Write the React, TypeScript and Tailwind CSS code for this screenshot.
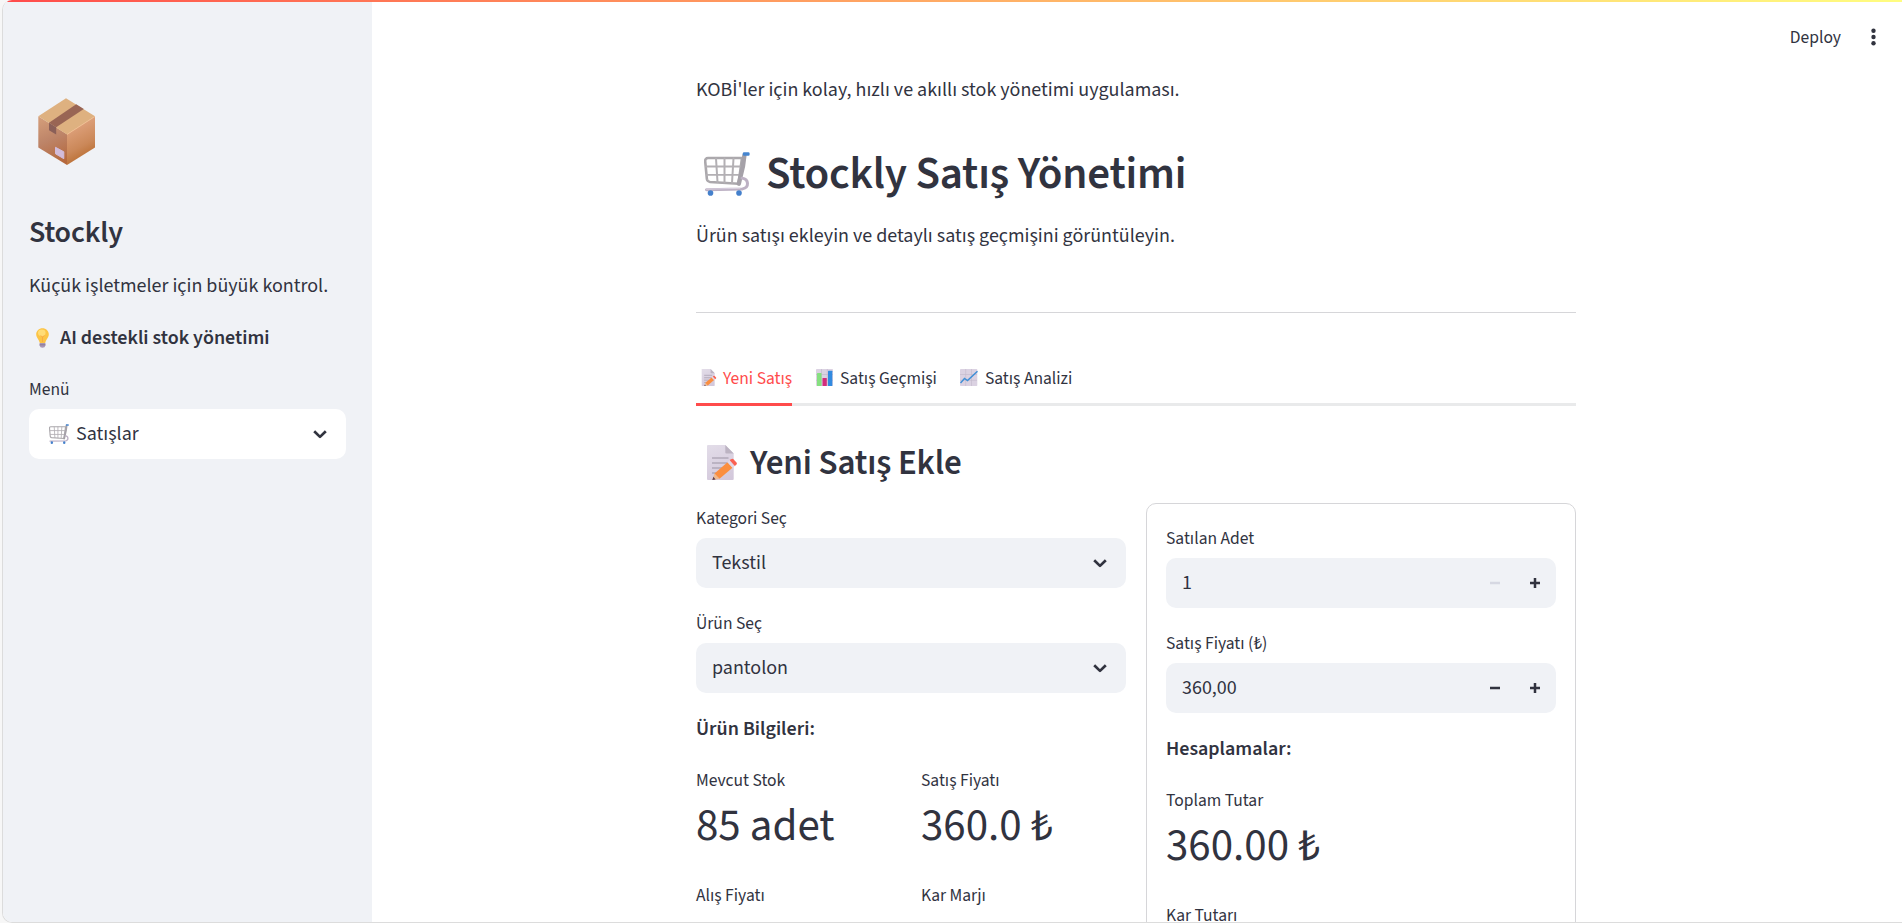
import type { ReactNode } from "react";

function PackageIcon({ className }: { className: string }) {
  return (
    <svg viewBox="0 0 57 67" className={className} fill="none">
      <defs>
        <linearGradient id="boxLeft" x1="0" y1="18" x2="22" y2="66" gradientUnits="userSpaceOnUse">
          <stop stopColor="#d6a07c" />
          <stop offset="0.5" stopColor="#bd8468" />
          <stop offset="1" stopColor="#b5683c" />
        </linearGradient>
        <linearGradient id="boxRight" x1="34" y1="30" x2="50" y2="60" gradientUnits="userSpaceOnUse">
          <stop stopColor="#dda07a" />
          <stop offset="0.6" stopColor="#cb8859" />
          <stop offset="1" stopColor="#b96d31" />
        </linearGradient>
      </defs>
      <path d="M0.3 18.3 29 36.3V67L0.3 49.4Z" fill="url(#boxLeft)" />
      <path d="M57 18.3 29 36.3V67L57 49.4Z" fill="url(#boxRight)" />
      <path d="M28 0.3 57 18.3 29 36.5 0.3 18.3Z" fill="#deb180" />
      <path d="M29 36.5 57 18.5" stroke="#f0be92" strokeWidth="0.9" />
      <path d="M38.2 6.2 45.8 10.9 18.2 29.3 11 24.8Z" fill="#996554" />
      <path d="M11 24.8 18.2 29.3V36.5L11 32.2Z" fill="#8a5f58" />
      <path d="M17.5 49.3 25.8 53.8V60.7L17.5 55.8Z" fill="#d2bcda" stroke="#d2bcda" strokeWidth="1" strokeLinejoin="round" />
    </svg>
  );
}

function CartIcon({ className }: { className: string }) {
  return (
    <svg viewBox="0 0 46 47" preserveAspectRatio="none" className={className} fill="none" strokeLinecap="round" strokeLinejoin="round">
      <path d="M4 6.5H38L34.5 34 6 32Q3.3 31.5 2.9 29L1.2 10Q1 6.5 4 6.5Z" stroke="#aba8ac" strokeWidth="2.6" />
      <path d="M2 15.5H36.5M3 24.5H35.5M12 7 13.5 32M20.5 7V32.5M29.5 7 28 33" stroke="#b3b0b4" strokeWidth="2" />
      <path d="M40.4 3.5 39 15 34.8 34" stroke="#a5a1a8" strokeWidth="4.4" />
      <path d="M38 28C45 29 45.5 38 38.5 39.5L2.5 40.3" stroke="#bdb1c4" strokeWidth="3" />
      <path d="M36 38.8 2.5 39.7" stroke="#dcd3e2" strokeWidth="1" />
      <rect x="38.8" y="0.3" width="6.8" height="3.8" rx="1.2" fill="#4585cf" />
      <ellipse cx="6.5" cy="43.8" rx="2.8" ry="3" fill="#4480cc" />
      <ellipse cx="35" cy="43.8" rx="2.8" ry="3" fill="#4480cc" />
    </svg>
  );
}

function BulbIcon({ className }: { className: string }) {
  return (
    <svg viewBox="0 0 13 20" className={className} fill="none">
      <path d="M6.5 0.2C10 0.2 12.8 2.9 12.8 6.3C12.8 9.7 10 11.2 9.2 15H3.8C3 11.2 0.2 9.7 0.2 6.3C0.2 2.9 3 0.2 6.5 0.2Z" fill="#fcc445" />
      <ellipse cx="5.8" cy="4.8" rx="3.8" ry="3.4" fill="#ffdc76" />
      <path d="M4.5 7.5 6.5 9 8.5 7.5M6.5 9V14" stroke="#f6a545" strokeWidth="0.8" />
      <path d="M3.6 15H9.4V17.5Q9 19.8 6.5 19.8Q4 19.8 3.6 17.5Z" fill="#a897b5" />
      <path d="M3.6 16.8H9.4" stroke="#84708f" strokeWidth="0.8" />
    </svg>
  );
}

function MemoIcon({ className }: { className: string }) {
  return (
    <svg viewBox="0 0 30 35" className={className} fill="none">
      <defs>
        <linearGradient id="memoSheet" x1="4" y1="0" x2="20" y2="35" gradientUnits="userSpaceOnUse">
          <stop stopColor="#e2dce8" />
          <stop offset="1" stopColor="#d3c8db" />
        </linearGradient>
      </defs>
      <path d="M1 0H18.3L26.7 8.5V34Q26.7 35 25.7 35H1Q0 35 0 34V1Q0 0 1 0Z" fill="url(#memoSheet)" />
      <path d="M18.3 0 26.7 8.5H19.3Q18.3 8.5 18.3 7.5Z" fill="#bcb3c2" />
      <path d="M5 13H21.5M5 18H20M5 23H15M5 28H10" stroke="#9b93a3" strokeWidth="1.2" />
      <path d="M7.5 28.5 12.5 33.8 5.3 35Z" fill="#efb98e" />
      <path d="M6.4 31.8 8.6 34.4 5.3 35Z" fill="#5c4151" />
      <path d="M7.5 28.5 20.5 17.3 25.5 22.8 12.5 33.8Z" fill="#fb8e3f" />
      <path d="M20.5 17.3 22.8 15.3 27.8 20.9 25.5 22.8Z" fill="#e2d8e6" />
      <path d="M22.8 15.3 24.2 14.2Q25.5 13.2 26.7 14.4L29.5 17.6Q30.4 18.8 29.3 19.7L27.8 20.9Z" fill="#fa6152" />
    </svg>
  );
}

function BarsIcon({ className }: { className: string }) {
  return (
    <svg viewBox="0 0 17 17" className={className}>
      <rect width="17" height="17" rx="0.8" fill="#dbd2e2" />
      <path d="M5.5 0V17M11.3 0V17M0 5.5H17M0 11.3H17" stroke="#c0b5c9" strokeWidth="0.6" />
      <rect x="1" y="4" width="4.5" height="13" rx="0.5" fill="#86e080" />
      <rect x="6.5" y="9" width="4.3" height="8" rx="0.5" fill="#d32c7c" />
      <rect x="12" y="1.8" width="4.3" height="15.2" rx="0.5" fill="#328ae0" />
    </svg>
  );
}

function TrendIcon({ className }: { className: string }) {
  return (
    <svg viewBox="0 0 18 17" className={className} fill="none">
      <rect width="17.3" height="17" rx="0.8" fill="#dbd2e2" />
      <path d="M5.7 0V17M11.5 0V17M0 5.5H17M0 11.3H17" stroke="#c3b9cb" strokeWidth="0.6" />
      <path d="M0.5 14 4.5 9.5 7.5 11.5 17.5 2.3" stroke="#3f8fd6" strokeWidth="1.5" />
    </svg>
  );
}

function Chevron() {
  return (
    <svg viewBox="0 0 14 9" className="h-[9px] w-[14px]" fill="none" stroke="#31333f" strokeWidth="2.7">
      <path d="M1.2 1.2 7 6.9 12.8 1.2" strokeLinejoin="round" />
    </svg>
  );
}

function Label({ children }: { children: ReactNode }) {
  return <div className="text-[17.5px] leading-[31px]">{children}</div>;
}

function SelectField({ label, value, icon, tone }: { label: string; value: string; icon?: ReactNode; tone: string }) {
  return (
    <div>
      <Label>{label}</Label>
      <div className={`mt-1 flex h-[50px] items-center rounded-[10px] pr-[19px] ${icon ? "pl-5" : "pl-4"} ${tone}`}>
        {icon}
        <span className="grow leading-8">{value}</span>
        <Chevron />
      </div>
    </div>
  );
}

function NumberField({ label, value, minusTone }: { label: string; value: string; minusTone: string }) {
  return (
    <div>
      <Label>{label}</Label>
      <div className="mt-1 flex h-[50px] items-center rounded-[10px] bg-[#f0f2f6] pr-px pl-4">
        <span className="grow leading-8">{value}</span>
        <button className={`flex h-full w-10 items-center justify-center ${minusTone}`}>
          <svg viewBox="0 0 10 10" className="h-[10px] w-[10px]" stroke="currentColor" strokeWidth="2.5">
            <path d="M0 5H10" />
          </svg>
        </button>
        <button className="flex h-full w-10 items-center justify-center">
          <svg viewBox="0 0 10 10" className="h-[10px] w-[10px]" stroke="currentColor" strokeWidth="2.5">
            <path d="M0 5H10M5 0V10" />
          </svg>
        </button>
      </div>
    </div>
  );
}

function Metric({ label, value }: { label: string; value?: string }) {
  return (
    <div className="h-[115px]">
      <Label>{label}</Label>
      {value && <div className="mt-[3px] text-[45px] leading-[54px] whitespace-nowrap">{value}</div>}
    </div>
  );
}

export default function App() {
  return (
    <div className="h-[923px] w-full overflow-hidden bg-[#f7f7f7] pl-[2px] font-['Source_Sans_3','Noto_Sans_CJK_SC','Open_Sans',sans-serif] text-[20px] text-[#31333f]">
      <div className="relative flex h-full overflow-hidden rounded-l-[10px] border-b border-l border-[#dcdcdc] bg-white">
        <div className="absolute inset-x-0 top-0 h-[2px] bg-linear-to-r from-[#ff4b4b] to-[#fffd80]" />
        <aside className="w-[369px] shrink-0 bg-[#f0f2f6] px-[26px]">
          <PackageIcon className="mt-[98px] ml-[9px] h-[67px] w-[57px]" />
          <h2 className="mt-[50px] text-[30px] leading-9 font-semibold tracking-[-0.005em]">Stockly</h2>
          <p className="mt-[19px] leading-8">Küçük işletmeler için büyük kontrol.</p>
          <p className="mt-5 flex items-center leading-8 font-semibold">
            <BulbIcon className="mr-[11px] ml-[7px] h-5 w-[13px]" />
            AI destekli stok yönetimi
          </p>
          <div className="mt-5">
            <SelectField
              label="Menü"
              value="Satışlar"
              tone="bg-white"
              icon={<CartIcon className="mr-[7px] h-5 w-5" />}
            />
          </div>
        </aside>

        <div className="flex min-w-0 grow justify-center pr-[2px]">
          <main className="w-[880px] pt-[74px]">
            <p className="leading-8">KOBİ'ler için kolay, hızlı ve akıllı stok yönetimi uygulaması.</p>
            <h1 className="mt-[41px] flex items-center text-[45px] leading-[54px] font-semibold tracking-[-0.005em]">
              <CartIcon className="mr-[16px] ml-[8px] h-[44px] w-[46px]" />
              Stockly Satış Yönetimi
            </h1>
            <p className="mt-[19px] leading-8">Ürün satışı ekleyin ve detaylı satış geçmişini görüntüleyin.</p>
            <hr className="mt-[60px] border-[#d6d6d9]" />

            <div className="mt-[52px] flex h-[41px] gap-[20px] border-b-[3px] border-[#e9eaeb] text-[17.5px] leading-7 whitespace-nowrap">
              <div className="flex h-[41px] w-24 items-start border-b-[3px] border-[#ff4b4b] text-[#ff4b4b]">
                <MemoIcon className="mt-[4px] mr-[6px] ml-[5px] h-[17px] w-4 shrink-0" />
                Yeni Satış
              </div>
              <div className="flex items-start">
                <BarsIcon className="mt-[4px] mr-[7px] ml-[4px] h-[17px] w-[17px]" />
                Satış Geçmişi
              </div>
              <div className="flex items-start">
                <TrendIcon className="mt-[4px] mr-[7px] ml-[3px] h-[17px] w-[18px]" />
                Satış Analizi
              </div>
            </div>

            <h2 className="mt-9 flex items-center text-[35px] leading-[42px] font-semibold tracking-[-0.005em]">
              <MemoIcon className="mr-[13px] mb-[2px] ml-[11px] h-[35px] w-[30px]" />
              Yeni Satış Ekle
            </h2>

            <div className="mt-[19px] grid grid-cols-2 gap-5">
              <section className="flex flex-col gap-5">
                <SelectField label="Kategori Seç" value="Tekstil" tone="bg-[#f0f2f6]" />
                <SelectField label="Ürün Seç" value="pantolon" tone="bg-[#f0f2f6]" />
                <p className="leading-8 font-semibold">Ürün Bilgileri:</p>
                <div className="grid grid-cols-2 gap-x-5">
                  <Metric label="Mevcut Stok" value="85 adet" />
                  <Metric label="Satış Fiyatı" value="360.0 ₺" />
                  <Metric label="Alış Fiyatı" />
                  <Metric label="Kar Marjı" />
                </div>
              </section>

              <section className="flex flex-col gap-5 rounded-[10px] border border-[#d6d6d9] p-[19px]">
                <NumberField label="Satılan Adet" value="1" minusTone="text-[#d6d8e2]" />
                <NumberField label="Satış Fiyatı (₺)" value="360,00" minusTone="text-[#31333f]" />
                <p className="leading-8 font-semibold">Hesaplamalar:</p>
                <div>
                  <Metric label="Toplam Tutar" value="360.00 ₺" />
                  <Metric label="Kar Tutarı" />
                </div>
              </section>
            </div>
          </main>
        </div>

        <div className="absolute top-[24px] right-[23px] flex items-center gap-[30px] text-[17.5px] leading-7">
          <span>Deploy</span>
          <svg viewBox="0 0 5 18" className="mr-[3px] mb-[2px] h-[18px] w-[5px]" fill="currentColor">
            <circle cx="2.5" cy="2.7" r="2.2" />
            <circle cx="2.5" cy="9" r="2.2" />
            <circle cx="2.5" cy="15.3" r="2.2" />
          </svg>
        </div>
      </div>
    </div>
  );
}
